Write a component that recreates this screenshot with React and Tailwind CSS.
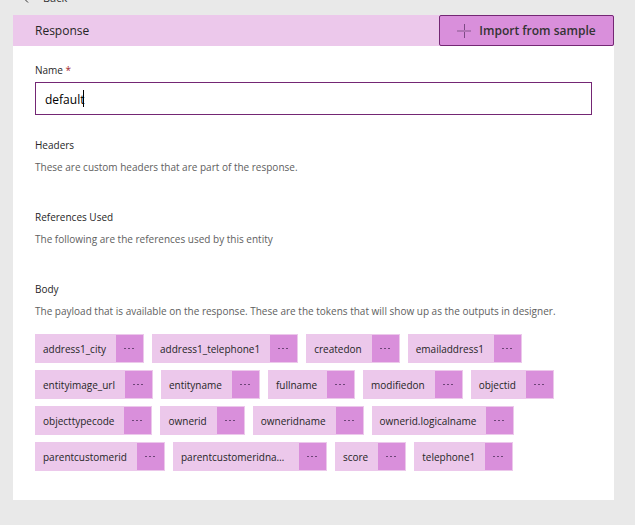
import React, { useState } from "react";

const tokens = [
  "address1_city",
  "address1_telephone1",
  "createdon",
  "emailaddress1",
  "entityimage_url",
  "entityname",
  "fullname",
  "modifiedon",
  "objectid",
  "objecttypecode",
  "ownerid",
  "owneridname",
  "ownerid.logicalname",
  "parentcustomerid",
  "parentcustomeridname",
  "score",
  "telephone1",
];

function Token({ name }) {
  return (
    <li className="flex h-[29px] border border-[#ecc8eb] bg-[#ecc8eb]">
      <span className="max-w-[125px] truncate pr-2.5 pl-[7px] leading-7 text-[#262626]">{name}</span>
      <button
        type="button"
        aria-label={`More options for ${name}`}
        className="flex w-[27px] shrink-0 items-center justify-center bg-[#d98fdb]"
      >
        <svg width="11" height="2" viewBox="0 0 11 2" fill="#6d4577" aria-hidden="true">
          <rect x="0" y="0" width="2" height="1" />
          <rect x="4" y="0" width="2" height="1" />
          <rect x="8" y="0" width="2" height="1" />
        </svg>
      </button>
    </li>
  );
}

function Section({ title, description, children }) {
  return (
    <section>
      <h2 className="text-[#262626]">{title}</h2>
      <p className="mt-1 text-[#606060]">{description}</p>
      {children}
    </section>
  );
}

export default function App() {
  const [name, setName] = useState("default");
  return (
    <div className="min-h-screen overflow-hidden bg-[#e9e9e9] pr-[21px] pl-[13px] font-['Open_Sans',sans-serif] text-[10px] leading-[18px]">
      <button type="button" className="-mt-[11px] ml-2.5 flex h-[26px] items-start gap-3.5 text-[11px] text-[#333333]">
        <svg width="6" height="18" viewBox="0 0 6 18" fill="none" stroke="#333333" aria-hidden="true">
          <path d="M5 5.5 1 9.5 5 13.5" />
        </svg>
        Back
      </button>
      <main className="bg-white">
        <header className="flex h-[31px] items-stretch justify-between bg-[#ecc8eb]">
          <h1 className="pl-[22px] text-[12px] leading-8 font-medium text-[#262626]">Response</h1>
          <button
            type="button"
            className="flex w-[175px] items-center justify-center gap-2 rounded-xs border border-[#742774] bg-[#d98fdb] pt-px text-[12px] font-semibold text-[#333333]"
          >
            <svg width="14" height="14" viewBox="0 0 14 14" fill="none" aria-hidden="true">
              <path d="M7.5 0v14" stroke="#7c4a84" />
              <path d="M0 7h14" stroke="#b073b4" strokeWidth="2" />
            </svg>
            Import from sample
          </button>
        </header>
        <div className="flex flex-col gap-8 px-[22px] pt-[15px] pb-[29px]">
          <div className="-mb-[11px]">
            <label htmlFor="name" className="block text-[#262626]">
              Name <span className="text-[#a4262c]">*</span>
            </label>
            <div className="relative mt-[3px]">
              <input
                id="name"
                type="text"
                required
                value={name}
                onChange={(e) => setName(e.target.value)}
                className="block h-[33px] w-full border border-[#742774] bg-white px-[9px] pt-0.5 text-[12px] text-black outline-none"
              />
              <span className="absolute top-2 left-12 h-[17px] w-px bg-black" aria-hidden="true" />
            </div>
          </div>
          <Section title="Headers" description="These are custom headers that are part of the response." />
          <Section title="References Used" description="The following are the references used by this entity" />
          <Section
            title="Body"
            description="The payload that is available on the response. These are the tokens that will show up as the outputs in designer."
          >
            <ul className="mt-3.5 flex flex-wrap gap-x-2 gap-y-[7px]">
              {tokens.map((token) => (
                <Token key={token} name={token} />
              ))}
            </ul>
          </Section>
        </div>
      </main>
    </div>
  );
}
